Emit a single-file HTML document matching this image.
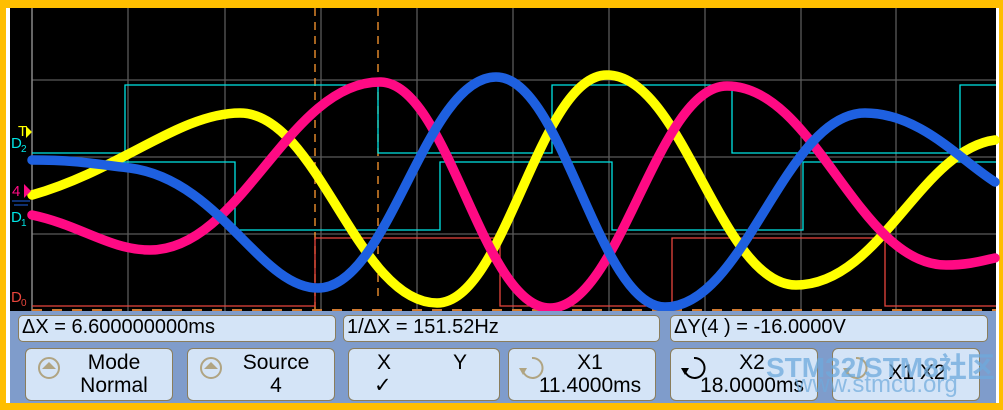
<!DOCTYPE html>
<html><head><meta charset="utf-8"><style>
*{margin:0;padding:0}
body{width:1003px;height:410px;background:#ffbe00;position:relative;overflow:hidden;font-family:"Liberation Sans",sans-serif}
#panel{position:absolute;left:10px;top:311px;width:986px;height:92px;background:#7f9ccb}
.box{position:absolute;background:#d4e4f7;border:1px solid #8a7d5c;border-radius:5px;color:#000;font-size:20px;line-height:22px}
.btn{position:absolute;top:348px;height:51px;width:146px;background:#d4e4f7;border:1px solid #8a7d5c;border-radius:6px;font-size:21px;line-height:23px;text-align:center;color:#000}
.ic{position:absolute;left:10px;top:6px}
</style></head><body>
<div style="position:absolute;left:6px;top:8px;width:4px;height:395px;background:#fff"></div>
<div style="position:absolute;left:996px;top:8px;width:3px;height:395px;background:#fff"></div>
<svg style="position:absolute;left:0;top:0" width="1003" height="410">
<rect x="10" y="8" width="986" height="303" fill="#000"/>
<g stroke="#5a5a5a" stroke-width="1.3">
<line x1="128" y1="8" x2="128" y2="311"/><line x1="225" y1="8" x2="225" y2="311"/><line x1="321" y1="8" x2="321" y2="311"/><line x1="417" y1="8" x2="417" y2="311"/><line x1="513" y1="8" x2="513" y2="311"/><line x1="609" y1="8" x2="609" y2="311"/><line x1="705" y1="8" x2="705" y2="311"/><line x1="801" y1="8" x2="801" y2="311"/><line x1="896" y1="8" x2="896" y2="311"/>
<line x1="32" y1="80" x2="996" y2="80"/><line x1="32" y1="157" x2="996" y2="157"/><line x1="32" y1="234" x2="996" y2="234"/>
</g>
<line x1="32" y1="8" x2="32" y2="311" stroke="#888" stroke-width="1.5"/>
<g stroke="#ff9a30" stroke-width="1.3" stroke-dasharray="8,6"><line x1="315" y1="8" x2="315" y2="311"/><line x1="378" y1="8" x2="378" y2="300"/></g>
<line x1="32" y1="310" x2="996" y2="310" stroke="#d07a30" stroke-width="2" stroke-dasharray="10,10"/>
<g fill="none" stroke-width="1.3">
<polyline stroke="#00e5e5" points="32,153 125,153 125,85 378,85 378,153 552,153 552,85 732,85 732,153 960,153 960,85 996,85"/>
<polyline stroke="#00e5e5" points="32,162 235,162 235,230 440,230 440,162 612,162 612,230 803,230 803,162 996,162"/>
<polyline stroke="#e8453c" points="32,306 315,306 315,238 500,238 500,306 672,306 672,238 885,238 885,306 996,306"/>
</g>
<g fill="none" stroke-width="9.5" stroke-linecap="round">
<path stroke="#ffff00" d="M32,195 C120,170 180,113 240,113 C318,113 357,303 437,303 C505,303 539,75 607,75 C683,75 720,285 796,285 C880,285 920,150 995,140"/>
<path stroke="#ff0a84" d="M32,215 C80,225 110,250 150,250 C242,250 288,82 380,82 C448,82 482,308 550,308 C620,308 657,86 727,86 C815,86 858,265 946,265 C970,265 985,260 995,258"/>
<path stroke="#1e60e0" d="M32,160 C80,160 100,165 130,168 C220,180 260,288 318,288 C389,288 425,77 496,77 C563,77 598,307 665,307 C745,307 785,113 865,113 C920,113 960,160 995,182"/>
</g>
<g font-family="Liberation Sans,sans-serif" font-size="15">
<text x="18" y="136" fill="#ffff00">T</text><polygon points="26,126 32,132 26,138" fill="#ffff00"/>
<text x="11" y="148" fill="#00e5e5">D</text><text x="21" y="152" fill="#00e5e5" font-size="10">2</text>
<text x="12" y="196" fill="#ff0a84">4</text><polygon points="24,184 31,191 24,198" fill="#ff0a84"/>
<line x1="12" y1="201" x2="30" y2="201" stroke="#1e60e0"/><line x1="14" y1="205" x2="28" y2="205" stroke="#1e60e0"/>
<text x="11" y="222" fill="#00e5e5">D</text><text x="21" y="226" fill="#00e5e5" font-size="10">1</text>
<text x="11" y="302" fill="#e8453c">D</text><text x="21" y="306" fill="#e8453c" font-size="10">0</text>
</g>
</svg>
<div id="panel"></div>
<div class="box" style="left:18px;top:315px;width:313px;height:25px;padding-left:3px">ΔX = 6.600000000ms</div>
<div class="box" style="left:343px;top:315px;width:312px;height:25px;padding-left:3px">1/ΔX = 151.52Hz</div>
<div class="box" style="left:670px;top:315px;width:313px;height:25px;padding-left:3px">ΔY(4 ) = -16.0000V</div>
<svg width="0" height="0" style="position:absolute"><defs><g id="kn"><circle cx="13" cy="13" r="10" fill="none" stroke="#b0a482" stroke-width="2"/><polygon points="6,14 13,7 20,14" fill="#b0a482"/></g></defs></svg>
<div class="btn" style="left:25px"><svg class="ic" width="28" height="28"><use href="#kn"/></svg><div style="padding-left:30px;padding-top:2px">Mode<br>Normal</div></div>
<div class="btn" style="left:187px"><svg class="ic" width="28" height="28"><use href="#kn"/></svg><div style="padding-left:30px;padding-top:2px">Source<br>4</div></div>
<div class="btn" style="left:348px;width:150px"><div style="position:absolute;left:28px;top:2px">X</div><div style="position:absolute;left:104px;top:2px">Y</div><div style="position:absolute;left:25px;top:25px">✓</div></div>
<div class="btn" style="left:508px"><svg class="ic" width="28" height="28"><path d="M13 3 A10 10 0 1 1 4 16" fill="none" stroke="#b0a482" stroke-width="2"/><polygon points="0,13 8,13 4,20" fill="#b0a482"/></svg><div style="padding-left:16px;padding-top:2px">X1<br>11.4000ms</div></div>
<div class="btn" style="left:670px"><svg class="ic" width="28" height="28"><path d="M13 3 A10 10 0 1 1 4 16" fill="none" stroke="#000" stroke-width="2"/><polygon points="0,13 8,13 4,20" fill="#000"/></svg><div style="padding-left:16px;padding-top:2px">X2<br>18.0000ms</div></div>
<div class="btn" style="left:832px"><svg class="ic" width="28" height="28"><path d="M13 3 A10 10 0 1 1 4 16" fill="none" stroke="#b0a482" stroke-width="2"/><polygon points="0,13 8,13 4,20" fill="#b0a482"/></svg><div style="padding-left:22px;padding-top:12px">X1 X2</div></div>
<div style="position:absolute;left:766px;top:346px;font-size:28px;font-weight:bold;color:rgba(110,170,220,0.75);font-family:'Liberation Sans','Noto Sans CJK SC',sans-serif">STM32/STM8社区</div>
<div style="position:absolute;left:795px;top:371px;font-size:24px;color:rgba(110,170,220,0.7)">www.stmcu.org</div>
</body></html>
